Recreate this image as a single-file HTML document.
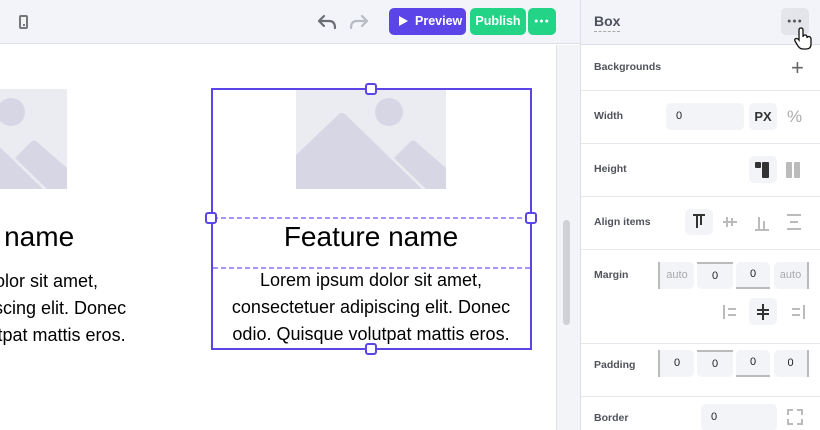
<!DOCTYPE html>
<html><head><meta charset="utf-8"><style>
*{box-sizing:border-box;margin:0;padding:0}
html,body{width:820px;height:430px;overflow:hidden}
body{position:relative;background:#fff;font-family:"Liberation Sans",sans-serif}
.abs{position:absolute}
.top{left:0;top:0;width:580px;height:44px;background:#f2f4f9;border-bottom:1px solid #dcdfe6}
.btn{position:absolute;top:8px;height:27px;border-radius:5px;color:#fff;font-weight:bold;font-size:12.5px;line-height:27px}
.panel{left:580px;top:0;width:240px;height:430px;background:#fff;border-left:1px solid #dcdfe6;overflow:hidden}
.row{position:absolute;left:0;width:240px;border-bottom:1px solid #e6e8ee}
.lbl{position:absolute;left:13px;font-size:10.5px;font-weight:bold;color:#50535b}
.inp{position:absolute;background:#f2f4f8;border-radius:5px;font-size:11px;color:#222;padding-left:10px}
.ctr{text-align:center;padding-left:0}
.txt{position:absolute;text-align:center;color:#000}
.h{width:12px;height:12px;border:2px solid #5b45e8;border-radius:3px;background:#fff;position:absolute}
.canvas{left:0;top:45px;width:556px;height:385px;overflow:hidden}
.dash{position:absolute;height:2px;background:repeating-linear-gradient(90deg,#a596f2 0 5px,transparent 5px 8px)}
</style></head><body>
<div class="abs top"></div>
<div class="abs" style="left:19px;top:15px;width:9px;height:14px;border:2px solid #777;border-radius:2px"></div>
<div class="abs" style="left:23px;top:24px;width:1.5px;height:1.5px;background:#777"></div>
<svg class="abs" style="left:316px;top:12px" width="22" height="20" viewBox="0 0 22 20"><path d="M8 4 L3 9 L8 14 M3 9 H13 Q19 9 19 16" fill="none" stroke="#6b6e76" stroke-width="2.2" stroke-linecap="round" stroke-linejoin="round"/></svg>
<svg class="abs" style="left:348px;top:12px" width="22" height="20" viewBox="0 0 22 20"><path d="M14 4 L19 9 L14 14 M19 9 H9 Q3 9 3 16" fill="none" stroke="#b8bbc2" stroke-width="2.2" stroke-linecap="round" stroke-linejoin="round"/></svg>
<div class="btn" style="left:389px;width:77px;background:#5b45e8"><span style="position:absolute;left:10px;top:8px;width:0;height:0;border-left:9px solid #fff;border-top:5.5px solid transparent;border-bottom:5.5px solid transparent"></span><span style="position:absolute;left:26px">Preview</span></div>
<div class="btn" style="left:470px;width:56px;background:#23d487;text-align:center">Publish</div>
<div class="btn" style="left:528px;width:28px;background:#23d487;text-align:center;font-size:7px;line-height:27px;letter-spacing:1px">●●●</div>
<div class="abs" style="left:556px;top:45px;width:24px;height:385px;background:#f3f4f8;border-left:1px solid #e0e2e8"></div>
<div class="abs" style="left:563px;top:220px;width:7px;height:105px;background:#cfd1d6;border-radius:4px"></div>

<div class="abs canvas">
<svg class="abs" style="left:-83px;top:44px" width="150" height="100" viewBox="0 0 150 100"><rect width="150" height="100" fill="#ebebf2"/><circle cx="94" cy="23" r="14" fill="#d7d6e4"/><path d="M0 66 L42 26 Q46 22 50 26 L126 100 L0 100Z" fill="#d7d6e4"/><path d="M98 69 L114 53 Q117 50 120 53 L150 79 L150 100 L130 100Z" fill="#d7d6e4"/></svg>
<svg class="abs" style="left:296px;top:44px" width="150" height="100" viewBox="0 0 150 100"><rect width="150" height="100" fill="#ebebf2"/><circle cx="93" cy="23" r="14" fill="#d7d6e4"/><path d="M0 66 L42 26 Q46 22 50 26 L126 100 L0 100Z" fill="#d7d6e4"/><path d="M98 69 L114 53 Q117 50 120 53 L150 79 L150 100 L130 100Z" fill="#d7d6e4"/></svg>

<div class="txt" style="left:-173px;width:320px;top:176px;font-size:28px">Feature name</div>
<div class="txt" style="left:-173px;width:320px;top:223px;font-size:18px;line-height:27px">Lorem ipsum dolor sit amet,<br>consectetuer adipiscing elit. Donec<br>odio. Quisque volutpat mattis eros.</div>
<div class="txt" style="left:211px;width:320px;top:176px;font-size:28px">Feature name</div>
<div class="txt" style="left:211px;width:320px;top:222px;font-size:18px;line-height:27px">Lorem ipsum dolor sit amet,<br>consectetuer adipiscing elit. Donec<br>odio. Quisque volutpat mattis eros.</div>
</div>

<div class="abs" style="left:211px;top:88px;width:321px;height:262px;border:2px solid #5b45e8"></div>
<div class="dash" style="left:213px;top:217px;width:317px"></div>
<div class="dash" style="left:213px;top:267px;width:317px"></div>
<div class="h" style="left:365px;top:83px"></div>
<div class="h" style="left:205px;top:212px"></div>
<div class="h" style="left:525px;top:212px"></div>
<div class="h" style="left:365px;top:343px"></div>

<div class="abs panel">
 <div class="row" style="top:0;height:45px;background:#f2f4f9;border-bottom-color:#dcdfe6"><span style="position:absolute;left:13px;top:13px;font-size:14px;font-weight:bold;color:#4f525a;border-bottom:1px dashed #aaa;padding-bottom:2px">Box</span>
 <div style="position:absolute;left:200px;top:8px;width:28px;height:27px;background:#e3e5ea;border-radius:5px;text-align:center;font-size:7px;line-height:27px;color:#555;letter-spacing:1px">●●●</div>
 <svg style="position:absolute;left:212px;top:27px" width="20" height="24" viewBox="0 0 20 24"><path d="M6 13 V3 Q6 1 8 1 Q10 1 10 3 V10 Q10 8 12 8 Q14 8 14 10 V11 Q14 9.5 16 9.5 Q18 10 18 12 V17 Q18 22 13 22 H10 Q7 22 5 19 L2 14 Q1 12 3 11.5 Q5 11.5 6 13Z" fill="#fff" stroke="#111" stroke-width="1.3"/></svg></div>
 <div class="row" style="top:45px;height:46px"><span class="lbl" style="top:16px">Backgrounds</span><span style="position:absolute;left:210px;top:10px;font-size:22px;color:#666;font-weight:300">+</span></div>
 <div class="row" style="top:91px;height:53px"><span class="lbl" style="top:19px">Width</span><div class="inp" style="left:85px;top:12px;width:78px;height:27px;line-height:27px">0</div><div class="inp ctr" style="left:168px;top:12px;width:28px;height:27px;line-height:27px;font-weight:bold;font-size:13px;color:#333">PX</div><span style="position:absolute;left:206px;top:16px;font-size:17px;color:#aaa">%</span></div>
 <div class="row" style="top:144px;height:53px"><span class="lbl" style="top:19px">Height</span><div class="inp" style="left:168px;top:12px;width:28px;height:27px"></div><div style="position:absolute;left:174px;top:18px;width:6px;height:6px;background:#333;border-radius:1px"></div><div style="position:absolute;left:181px;top:18px;width:7px;height:16px;background:#333;border-radius:1px"></div><div style="position:absolute;left:205px;top:18px;width:6px;height:16px;background:#bbb;border-radius:1px"></div><div style="position:absolute;left:213px;top:18px;width:6px;height:16px;background:#bbb;border-radius:1px"></div></div>
 <div class="row" style="top:197px;height:53px"><span class="lbl" style="top:19px">Align items</span><div class="inp" style="left:104px;top:12px;width:28px;height:26px"></div>
 <svg style="position:absolute;left:104px;top:12px" width="124" height="26"><g stroke="#333" stroke-width="2"><path d="M8 6 H20"/><path d="M12 7 V19"/><path d="M16 7 V16"/></g><g stroke="#bbb" stroke-width="2"><path d="M38 13 H52"/><path d="M42 8 V18"/><path d="M47 9 V17"/><path d="M70 21 H84"/><path d="M74 8 V20"/><path d="M79 12 V20"/><path d="M102 6 H116 M102 20 H116"/><path d="M105 13 H113"/></g></svg></div>
 <div class="row" style="top:250px;height:94px"><span class="lbl" style="top:19px">Margin</span>
 <div class="inp ctr" style="left:77px;top:12px;width:36px;height:27px;line-height:27px;color:#aaa;border-left:2px solid #bbb;border-radius:0 5px 5px 0">auto</div>
 <div class="inp ctr" style="left:116px;top:12px;width:36px;height:27px;line-height:25px;border-top:2px solid #bbb;border-radius:0 0 5px 5px">0</div>
 <div class="inp ctr" style="left:155px;top:12px;width:34px;height:27px;line-height:25px;border-bottom:2px solid #bbb;border-radius:5px 5px 0 0">0</div>
 <div class="inp ctr" style="left:193px;top:12px;width:35px;height:27px;line-height:27px;color:#aaa;border-right:2px solid #bbb;border-radius:5px 0 0 5px">auto</div>
 <div class="inp" style="left:168px;top:48px;width:28px;height:27px"></div>
 <svg style="position:absolute;left:138px;top:50px" width="90" height="24"><g stroke="#bbb" stroke-width="2"><path d="M5 5 V19 M9 9 H17 M9 15 H17"/><path d="M85 5 V19 M73 9 H81 M73 15 H81"/></g><g stroke="#333" stroke-width="2"><path d="M44 4 V20 M38 10 H50 M38 14 H50"/></g></svg></div>
 <div class="row" style="top:344px;height:53px"><span class="lbl" style="top:15px">Padding</span>
 <div class="inp ctr" style="left:77px;top:6px;width:36px;height:27px;line-height:27px;border-left:2px solid #bbb;border-radius:0 5px 5px 0">0</div>
 <div class="inp ctr" style="left:116px;top:6px;width:36px;height:27px;line-height:25px;border-top:2px solid #bbb;border-radius:0 0 5px 5px">0</div>
 <div class="inp ctr" style="left:155px;top:6px;width:34px;height:27px;line-height:25px;border-bottom:2px solid #bbb;border-radius:5px 5px 0 0">0</div>
 <div class="inp ctr" style="left:193px;top:6px;width:35px;height:27px;line-height:27px;border-right:2px solid #bbb;border-radius:5px 0 0 5px">0</div></div>
 <div class="row" style="top:397px;height:33px;border:none"><span class="lbl" style="top:15px">Border</span><div class="inp" style="left:120px;top:7px;width:76px;height:27px;line-height:27px">0</div><div style="position:absolute;left:206px;top:12px;width:16px;height:16px;border:2px dashed #bbb"></div></div>
</div>
</body></html>
